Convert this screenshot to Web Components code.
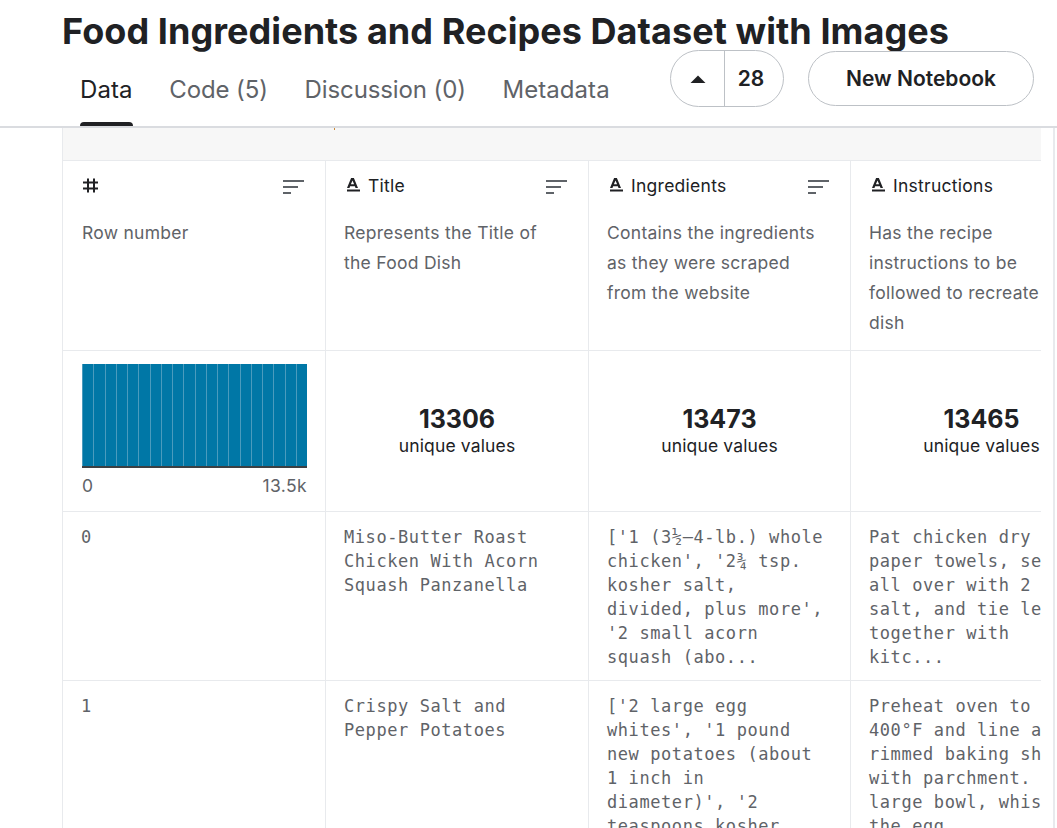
<!DOCTYPE html>
<html>
<head>
<meta charset="utf-8">
<style>
  html, body { margin: 0; height: 828px; overflow: hidden; background: #fff; font-family: Inter, "Liberation Sans", sans-serif; color: #202124; }
</style>
</head>
<body>
<ds-header>
  <ds-tab slot="tabs" active style="letter-spacing: .1px">Data</ds-tab>
  <ds-tab slot="tabs">Code (5)</ds-tab>
  <ds-tab slot="tabs">Discussion (0)</ds-tab>
  <ds-tab slot="tabs" style="letter-spacing: .05px">Metadata</ds-tab>
  <ds-vote slot="actions" count="28"></ds-vote>
  <ds-button slot="actions">New Notebook</ds-button>
</ds-header>
<ds-content>
  <ds-table>
    <ds-column-head type="number" name="">Row number</ds-column-head>
    <ds-column-head type="text" name="Title">Represents the Title of<br>the Food Dish</ds-column-head>
    <ds-column-head type="text" name="Ingredients">Contains the ingredients<br>as they were scraped<br>from the website</ds-column-head>
    <ds-column-head type="text" name="Instructions" nosort>Has the recipe<br>instructions to be<br>followed to recreate<br>dish</ds-column-head>

    <ds-histogram></ds-histogram>
    <ds-unique count="13306"></ds-unique>
    <ds-unique count="13473"></ds-unique>
    <ds-unique count="13465"></ds-unique>

    <ds-cell>0</ds-cell>
    <ds-cell>Miso-Butter Roast<br>Chicken With Acorn<br>Squash Panzanella</ds-cell>
    <ds-cell>['1 (3½–4-lb.) whole<br>chicken', '2¾ tsp.<br>kosher salt,<br>divided, plus more',<br>'2 small acorn<br>squash (abo...</ds-cell>
    <ds-cell>Pat chicken dry<br>paper towels, se<br>all over with 2<br>salt, and tie le<br>together with<br>kitc...</ds-cell>

    <ds-cell>1</ds-cell>
    <ds-cell>Crispy Salt and<br>Pepper Potatoes</ds-cell>
    <ds-cell>['2 large egg<br>whites', '1 pound<br>new potatoes (about<br>1 inch in<br>diameter)', '2<br>teaspoons kosher</ds-cell>
    <ds-cell>Preheat oven to<br>400°F and line a<br>rimmed baking sh<br>with parchment.<br>large bowl, whis<br>the egg</ds-cell>
  </ds-table>
</ds-content>

<script>
// page header: title row, then tabs on the left and actions on the right
class DsHeader extends HTMLElement {
  constructor() {
    super();
    this.attachShadow({ mode: 'open' });
    this.shadowRoot.innerHTML = `
      <style>
        :host { display: block; height: 126px; border-bottom: 2px solid #dadce0; }
        h1 { margin: 0; padding: 11px 0 0 62px; height: 39px; font-size: 36px; line-height: 40px; font-weight: 700; letter-spacing: .06px; color: #202124; white-space: nowrap; }
        .row { display: flex; height: 76px; }
        .tabs { display: flex; gap: 36.6px; padding-left: 80px; flex: 1; }
        .actions { display: flex; gap: 24px; padding-right: 23px; align-items: flex-start; }
      </style>
      <h1>Food Ingredients and Recipes Dataset with Images</h1>
      <div class="row">
        <div class="tabs"><slot name="tabs"></slot></div>
        <div class="actions"><slot name="actions"></slot></div>
      </div>
    `;
  }
}

class DsTab extends HTMLElement {
  constructor() {
    super();
    this.attachShadow({ mode: 'open' });
    this.shadowRoot.innerHTML = `
      <style>
        :host { display: block; height: 76px; box-sizing: border-box; padding-top: 24px; font-size: 24px; line-height: 32px; letter-spacing: -.1px; color: #5f6368; position: relative; white-space: nowrap; }
        :host([active]) { color: #202124; }
        :host([active])::after { content: ''; position: absolute; left: 0; right: 0; bottom: 0; height: 4px; background: #202124; border-radius: 4px 4px 0 0; }
      </style>
      <slot></slot>
    `;
  }
}

class DsVote extends HTMLElement {
  constructor() {
    super();
    this.attachShadow({ mode: 'open' });
    this.shadowRoot.innerHTML = `
      <style>
        :host { display: flex; width: 114px; height: 57px; box-sizing: border-box; border: 1px solid #bdc1c6; border-radius: 29px; background: #fff; }
        .up { width: 53px; display: flex; align-items: center; justify-content: center; border-right: 1px solid #bdc1c6; }
        .num { flex: 1; display: flex; align-items: center; justify-content: center; padding-right: 6px; font-size: 21px; font-weight: 600; color: #202124; }
      </style>
      <div class="up"><svg width="16" height="8" viewBox="0 0 16 8"><path d="M0.5 8 L8 0.5 L15.5 8 Z" fill="#202124"/></svg></div>
      <div class="num">${this.getAttribute('count')}</div>
    `;
  }
}

class DsButton extends HTMLElement {
  constructor() {
    super();
    this.attachShadow({ mode: 'open' });
    this.shadowRoot.innerHTML = `
      <style>
        :host { display: flex; align-items: center; justify-content: center; width: 226px; height: 55px; margin-top: 1px; box-sizing: border-box; border: 1px solid #bdc1c6; border-radius: 28px; font-size: 21px; font-weight: 600; color: #202124; white-space: nowrap; }
      </style>
      <slot></slot>
    `;
  }
}

// area under the header: the table, then the thin rule of the right rail
class DsContent extends HTMLElement {
  constructor() {
    super();
    this.attachShadow({ mode: 'open' });
    this.shadowRoot.innerHTML = `
      <style>
        :host { display: flex; height: 700px; padding-left: 62px; }
        .rail { margin-left: 12px; width: 2px; background: #e8eaed; }
      </style>
      <slot></slot>
      <div class="rail"></div>
    `;
  }
}

// table wrapper: the grey band on top, then a 4 column grid clipped on the right
class DsTable extends HTMLElement {
  constructor() {
    super();
    this.attachShadow({ mode: 'open' });
    this.shadowRoot.innerHTML = `
      <style>
        :host { display: block; width: 979px; overflow: hidden; border-left: 1px solid #e8eaed; box-sizing: border-box; }
        .band { height: 32px; background: #f7f7f7; border-bottom: 1px solid #e8eaed; position: relative; }
        .band i { position: absolute; left: 271px; top: 0; width: 1px; height: 2px; background: #c98a3a; }
        .grid { display: grid; grid-template-columns: 263px 263px 262px 262px; grid-template-rows: 190px 161px 169px 200px; width: 1050px; }
        ::slotted(:nth-child(4n+1)) { --pad: 19px; }
      </style>
      <div class="band"><i></i></div>
      <div class="grid"><slot></slot></div>
    `;
  }
}

const cellBorders = `border-right: 1px solid #e8eaed; border-bottom: 1px solid #e8eaed; box-sizing: border-box;`;

class DsColumnHead extends HTMLElement {
  constructor() {
    super();
    this.attachShadow({ mode: 'open' });
    const isText = this.getAttribute('type') === 'text';
    const icon = isText
      ? `<svg width="16" height="14" viewBox="0 0 16 14"><path d="M3 10 L7.1 0 H9.9 L14 10 H11.5 L10.9 8.2 H6.1 L5.5 10 Z M6.9 6.2 H10.1 L8.5 2.4 Z" fill="#202124" fill-rule="evenodd"/><rect x="3" y="11.5" width="13" height="2" fill="#202124"/></svg>`
      : `<svg width="16" height="15" viewBox="0 0 16 15"><path d="M6 0.5 V14.5 M12 0.5 V14.5 M1 4.5 H16 M1 10.5 H16" stroke="#202124" stroke-width="2" fill="none"/></svg>`;
    const sort = this.hasAttribute('nosort') ? '' :
      `<svg class="sort" width="21" height="14" viewBox="0 0 21 14"><rect x="0" y="0" width="21" height="2" fill="#5f6368"/><rect x="0" y="6" width="15" height="2" fill="#5f6368"/><rect x="0" y="12" width="8" height="2" fill="#5f6368"/></svg>`;
    this.shadowRoot.innerHTML = `
      <style>
        :host { display: block; ${cellBorders} padding: 0 21px 0 var(--pad, 18px); overflow: hidden; }
        .top { display: flex; align-items: center; height: 48px; font-size: 17.5px; letter-spacing: .27px; color: #202124; white-space: nowrap; }
        .top span { margin-left: 8px; }
        .sort { margin-left: auto; position: relative; top: 2px; }
        .desc { margin-top: 9px; font-size: 17.5px; letter-spacing: .27px; line-height: 30px; color: #5f6368; white-space: nowrap; }
      </style>
      <div class="top">${icon}<span>${this.getAttribute('name')}</span>${sort}</div>
      <div class="desc"><slot></slot></div>
    `;
  }
}

class DsHistogram extends HTMLElement {
  constructor() {
    super();
    this.attachShadow({ mode: 'open' });
    let bars = '';
    for (let i = 0; i < 20; i++) bars += '<b></b>';
    this.shadowRoot.innerHTML = `
      <style>
        :host { display: block; ${cellBorders} padding: 13px 18px 0 19px; }
        .bars { display: flex; height: 104px; border-bottom: 2px solid #3c4043; box-sizing: border-box; }
        b { flex: 1; background: #0077a6; border-left: 1px solid #4a9bbd; }
        .axis { display: flex; justify-content: space-between; margin-top: 6px; font-size: 17.5px; letter-spacing: .4px; line-height: 24px; color: #5f6368; }
      </style>
      <div class="bars">${bars}</div>
      <div class="axis"><span>0</span><span>13.5k</span></div>
    `;
  }
}

class DsUnique extends HTMLElement {
  constructor() {
    super();
    this.attachShadow({ mode: 'open' });
    this.shadowRoot.innerHTML = `
      <style>
        :host { display: flex; flex-direction: column; align-items: center; ${cellBorders} padding: 52px 0 0 0; }
        .n { font-size: 25px; line-height: 32px; font-weight: 700; color: #202124; }
        .l { font-size: 17.5px; letter-spacing: .15px; line-height: 22px; color: #202124; white-space: nowrap; }
      </style>
      <div class="n">${this.getAttribute('count')}</div>
      <div class="l">unique values</div>
    `;
  }
}

class DsCell extends HTMLElement {
  constructor() {
    super();
    this.attachShadow({ mode: 'open' });
    this.shadowRoot.innerHTML = `
      <style>
        :host { display: block; ${cellBorders} padding: 13px 0 0 18px; font-family: "DejaVu Sans Mono", "Liberation Mono", monospace; font-size: 17px; letter-spacing: .57px; line-height: 24px; color: #5f6368; white-space: nowrap; overflow: hidden; }
      </style>
      <slot></slot>
    `;
  }
}

customElements.define('ds-header', DsHeader);
customElements.define('ds-tab', DsTab);
customElements.define('ds-vote', DsVote);
customElements.define('ds-button', DsButton);
customElements.define('ds-content', DsContent);
customElements.define('ds-table', DsTable);
customElements.define('ds-column-head', DsColumnHead);
customElements.define('ds-histogram', DsHistogram);
customElements.define('ds-unique', DsUnique);
customElements.define('ds-cell', DsCell);
</script>
</body>
</html>
